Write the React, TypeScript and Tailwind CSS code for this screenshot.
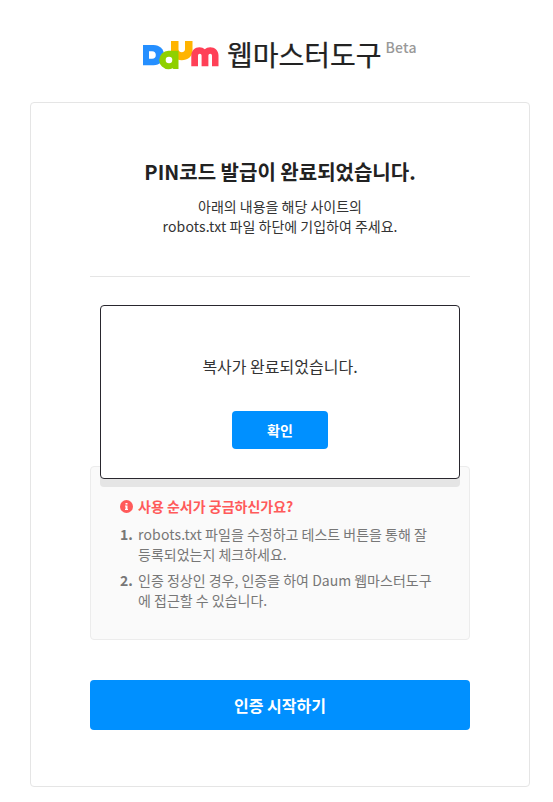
function DaumLogo() {
  return (
    <svg width="77" height="30" viewBox="0 0 77 30" className="mt-[41px] shrink-0" role="img" aria-label="Daum">
      <path d="M29 0h7.500v8.500a3.300 3.300 0 0 0 6.500 0V0h7.500v10c0 5.500-4.800 9.300-10.800 9.300S29 15.500 29 10z" fill="#ffb400" />
      <path d="M1 4h10.500C17.700 4 22 8.200 22 14s-4.300 10.200-10.500 10.200H1z" fill="#258fff" />
      <path d="M7 10.200h3a3.800 3.800 0 0 1 0 7.600H7z" fill="#fff" />
      <path d="M26.500 9.800h10V28h-5l-.8-.8a9 9 0 0 1-4.200 1.100 9.250 9.250 0 0 1 0-18.500z" fill="#8fd000" />
      <circle cx="27" cy="19" r="3.300" fill="#fff" />
      <path d="M49.300 25.200V14.500c0-5 3.700-8.300 8.100-8.300 2.200 0 4.100.8 5.400 2 1.300-1.200 3.200-2 5.400-2 4.700 0 8.300 3.300 8.300 8.300v10.700H70V14.700c0-1.300-.7-2-1.800-2s-1.800.7-1.800 2v10.500h-6.800V14.700c0-1.300-.7-2-1.800-2s-1.800.7-1.800 2v10.500z" fill="#ff4057" />
    </svg>
  );
}

export default function App() {
  return (
    <div className="h-[802px] w-[553px] overflow-hidden bg-white font-['Noto_Sans_CJK_KR','Noto_Sans',sans-serif] text-[#222]">
      <header className="flex h-[102px] pl-[142px]">
        <DaumLogo />
        <h1 className="mt-[34px] ml-[8px] text-[28px] leading-[40px] font-normal whitespace-nowrap [-webkit-text-stroke:0.25px_#222]">웹마스터도구</h1>
        <span className="mt-[37px] ml-[4px] text-[14px] leading-[20px] font-medium tracking-[.2px] text-[#999]">Beta</span>
      </header>
      <main className="relative ml-[30px] h-[685px] w-[500px] rounded-[4px] border border-[#e5e5e5] px-[59px]">
        <h2 className="pt-[54px] text-center text-[20px] leading-[30px] font-bold whitespace-nowrap">PIN코드 발급이 완료되었습니다.</h2>
        <p className="mt-[9px] h-[81px] border-b border-[#e5e5e5] text-center text-[14px] leading-[20px] text-[#333]">
          아래의 내용을 해당 사이트의
          <br />
          <span className="tracking-[.16px]">robots.txt</span> 파일 하단에 기입하여 주세요.
        </p>
        <section className="mt-[189px] h-[174px] rounded-[4px] border border-[#ececec] bg-[#fafafa] px-[29px] pt-[29px] text-[14px] leading-[20px] text-[#777]">
          <h3 className="flex items-center font-bold text-[#ff5a5a]">
            <svg width="13" height="13" viewBox="0 0 13 13" className="mr-[5px]" aria-hidden="true">
              <circle cx="6.500" cy="6.500" r="6.500" fill="#ff5a5a" />
              <path d="M5.500 3h2v1.500h-2zM5 5.500h2.500V9H8v1H5V9h.5V6.500H5z" fill="#fff" />
            </svg>
            사용 순서가 궁금하신가요?
          </h3>
          <ol>
            <li className="mt-[8px] flex whitespace-nowrap">
              <b className="w-[18px]">1.</b>
              <span><span className="tracking-[.16px]">robots.txt</span> 파일을 수정하고 테스트 버튼을 통해 잘<br />등록되었는지 체크하세요.</span>
            </li>
            <li className="mt-[6px] flex whitespace-nowrap">
              <b className="w-[18px]">2.</b>
              <span>인증 정상인 경우, 인증을 하여 Daum 웹마스터도구<br />에 접근할 수 있습니다.</span>
            </li>
          </ol>
        </section>
        <button className="mt-[40px] block h-[50px] w-full rounded-[4px] bg-[#0090ff] text-[16px] font-bold text-white">인증 시작하기</button>
        <div role="dialog" className="absolute top-[202px] left-[69px] flex h-[174px] w-[360px] flex-col items-center rounded-[4px] border border-[#29272e] bg-white shadow-[0_8px_0_#e5e5e5]">
          <p className="mt-[48px] text-[16px] leading-[24px] text-[#333]">복사가 완료되었습니다.</p>
          <button className="mt-[33px] h-[38px] w-[96px] rounded-[4px] bg-[#0090ff] text-[14px] font-bold text-white">확인</button>
        </div>
      </main>
    </div>
  );
}
